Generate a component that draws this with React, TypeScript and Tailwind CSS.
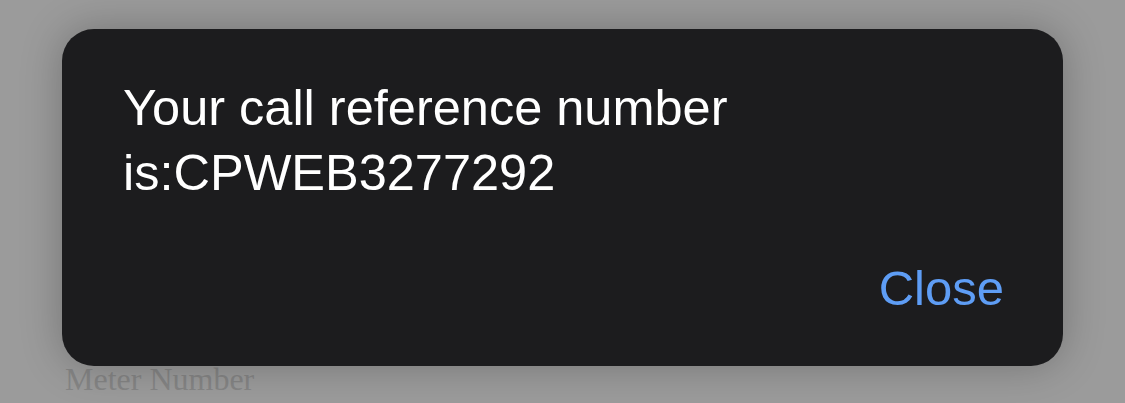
import React from "react";

export default function App() {
  return (
    <div className="relative h-[403px] w-[1125px] overflow-hidden bg-[#9b9b9b]">
      <div className="pl-[65px] pt-[361px]">
        <div
          className="text-[32px] leading-[36px] text-[#858585]"
          style={{ fontFamily: '"Liberation Serif", serif' }}
        >
          Meter Number
        </div>
      </div>
      <div
        className="absolute left-[62px] top-[29px] flex h-[337px] w-[1001px] flex-col rounded-[32px] bg-[#1c1c1e] pl-[61px] pr-[59px] pt-[46px] pb-[50px] shadow-[0_0_40px_rgba(0,0,0,0.25)]"
        style={{ fontFamily: '"Liberation Sans", Arial, sans-serif' }}
      >
        <div className="text-[50.5px] leading-[65px] text-white">
          Your call reference number
          <br />
          is:CPWEB3277292
        </div>
        <div className="mt-auto flex justify-end">
          <button className="text-[49px] leading-[56px] text-[#5e9df5]">Close</button>
        </div>
      </div>
    </div>
  );
}
